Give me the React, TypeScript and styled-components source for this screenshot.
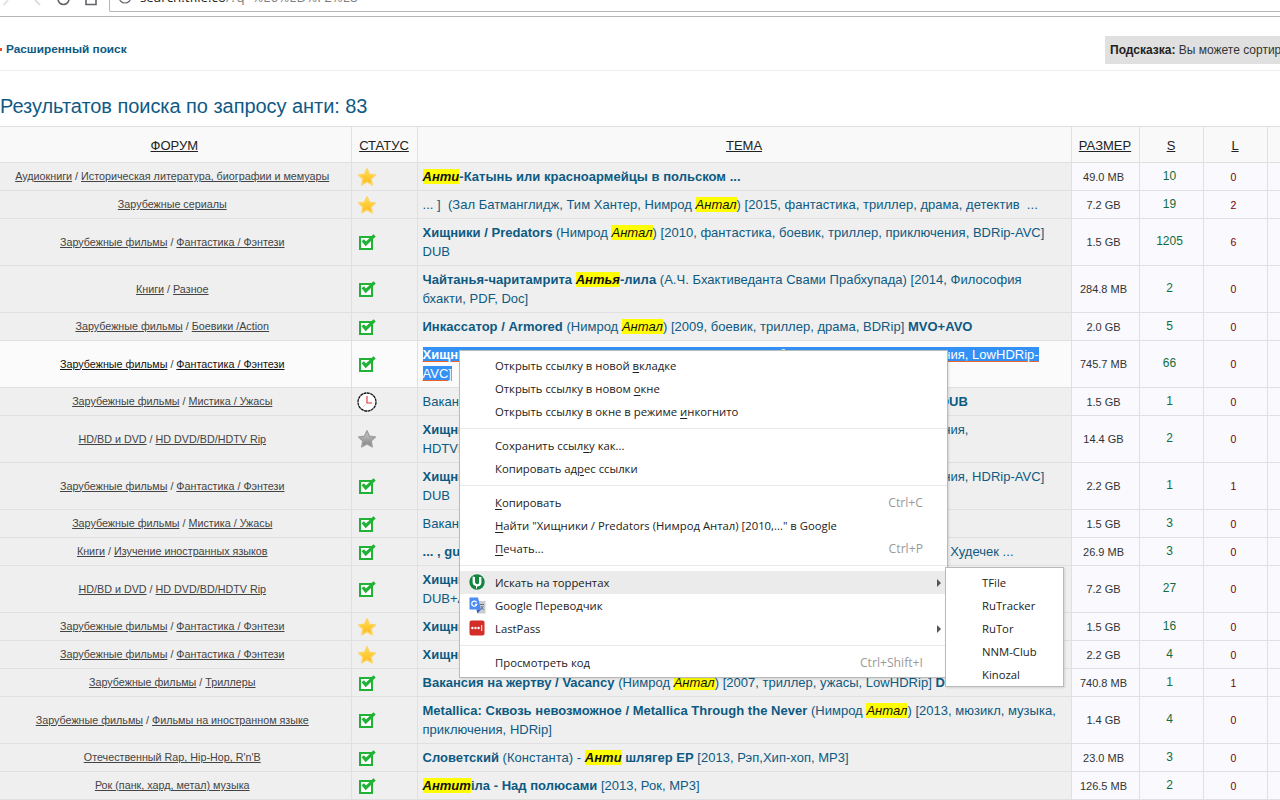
import React from "react";
import styled, { createGlobalStyle } from "styled-components";

const GlobalStyle = createGlobalStyle`
  html, body {
    margin: 0;
    padding: 0;
    height: 800px;
    overflow: hidden;
    background: #fff;
    font-family: "Liberation Sans", Arial, sans-serif;
  }
`;

const Page = styled.div`
  position: relative;
  width: 1280px;
  height: 800px;
  overflow: hidden;
`;

const Toolbar = styled.div`
  height: 16px;
  display: flex;
  align-items: flex-end;
  border-bottom: 1px solid #b5b5b5;
  overflow: hidden;
`;

const NavIcons = styled.div`
  width: 109px;
  height: 16px;
  flex: none;
  svg {
    display: block;
  }
`;

const AddressBox = styled.div`
  flex: 1;
  height: 20px;
  margin-bottom: 4px;
  display: flex;
  align-items: center;
  gap: 8px;
  padding-left: 8px;
  border-left: 1px solid #b5b5b5;
  border-bottom: 1px solid #b5b5b5;
  border-radius: 0 0 0 2px;
  font-family: "Open Sans", sans-serif;
  font-size: 13.3px;
  color: #222;
  white-space: nowrap;
  span {
    color: #808080;
  }
`;

const AddressText = styled.div`
  margin-top: -8px;
`;

const SearchBar = styled.div`
  display: grid;
  grid-template-columns: 1105px 1fr;
  align-items: center;
  height: 53px;
  border-bottom: 1px solid #eee;
  overflow: hidden;
`;

const AdvancedLink = styled.a`
  padding-top: 11px;
  font-size: 11.8px;
  font-weight: bold;
  color: #0d5a82;
  &::before {
    content: "";
    display: inline-block;
    width: 2px;
    height: 3px;
    margin: 0 4px 2px 0;
    background: #e2552b;
  }
`;

const Hint = styled.div`
  margin-top: 13px;
  height: 28px;
  line-height: 28px;
  padding-left: 5px;
  background: #e0e0e0;
  font-size: 12px;
  color: #333;
  white-space: nowrap;
  overflow: hidden;
  b {
    color: #222;
  }
`;

const Heading = styled.h1`
  margin: 0;
  height: 55px;
  padding-top: 23px;
  box-sizing: border-box;
  font-size: 20px;
  font-weight: normal;
  line-height: 24px;
  letter-spacing: -0.05px;
  color: #0f5a85;
`;

const Table = styled.table`
  width: 1340px;
  table-layout: fixed;
  border-collapse: collapse;
  border-top: 1px solid #e0e0e0;
`;

const HeadCell = styled.th<{ $w: number }>`
  box-sizing: border-box;
  width: ${(p) => p.$w}px;
  height: 36px;
  padding: 2px 0 0;
  background: #f9f9f9;
  border: 1px solid #e0e0e0;
  font-size: 13px;
  font-weight: normal;
  text-align: center;
  color: #222;
  text-decoration: underline;
  &:first-child {
    border-left: none;
    padding-right: 2px;
  }
`;

const ForumCell = styled.td`
  padding: 4px 8px 4px 2px;
  background: #efefef;
  border: 1px solid #e0e0e0;
  border-left: none;
  font-size: 10.75px;
  line-height: 19px;
  text-align: center;
  color: #444;
  u {
    color: #444;
  }
`;

const StatusCell = styled.td`
  padding: 0 0 0 5px;
  background: #efefef;
  border: 1px solid #e0e0e0;
  svg {
    display: block;
  }
`;

const TopicCell = styled.td`
  padding: 4px 8px 4px 5px;
  background: #efefef;
  border: 1px solid #e0e0e0;
  font-size: 13px;
  line-height: 19px;
  letter-spacing: 0.02px;
  color: #0d5a82;
  overflow: hidden;
`;

const Row = styled.tr<{ $active?: boolean }>`
  ${(p) =>
    p.$active
      ? `
    ${ForumCell}, ${StatusCell}, ${TopicCell} {
      background: #fbfbfb;
    }
    ${ForumCell} u {
      color: #111;
    }
  `
      : ""}
`;

const Mark = styled.i`
  background: #ffff00;
  color: #111;
`;

const Selected = styled.span`
  background: #3390f4;
  color: #fff;
  text-decoration: underline #e8622a;
  text-underline-offset: 2px;
`;

const SizeCell = styled.td`
  padding: 0 3px 0 0;
  background: #f9f9fe;
  border: 1px solid #e0e0e0;
  font-size: 11px;
  text-align: center;
  color: #333;
`;

const SeedCell = styled(SizeCell)`
  padding-bottom: 2px;
  font-size: 12px;
  color: #146c3c;
`;

const LeechCell = styled(SizeCell)`
  font-size: 10.5px;
  color: #7a0000;
`;

const Menu = styled.div`
  position: absolute;
  left: 459px;
  top: 350px;
  width: 487px;
  height: 323px;
  padding-top: 3px;
  box-sizing: content-box;
  background: #fff;
  border: 1px solid #bababa;
  box-shadow: 1px 1px 2px rgba(0, 0, 0, 0.12);
  font-family: "Open Sans", "Noto Sans", sans-serif;
  font-size: 11.3px;
  color: #222;
`;

const Item = styled.div<{ $hover?: boolean }>`
  position: relative;
  display: flex;
  align-items: center;
  height: 23px;
  padding-left: 35px;
  background: ${(p) => (p.$hover ? "#ebebeb" : "transparent")};
  white-space: nowrap;
  u {
    text-underline-offset: 2px;
  }
`;

const ItemIcon = styled.span`
  position: absolute;
  left: 9px;
  top: 3px;
  width: 17px;
  height: 17px;
  svg {
    display: block;
  }
`;

const Shortcut = styled.span`
  position: absolute;
  right: 24px;
  font-size: 12.2px;
  color: #9a9a9a;
`;

const Arrow = styled.span`
  position: absolute;
  right: 6px;
  top: 8px;
  width: 0;
  height: 0;
  border-left: 4px solid #555;
  border-top: 4px solid transparent;
  border-bottom: 4px solid transparent;
`;

const Separator = styled.div`
  height: 1px;
  margin: 5px 0;
  background: #e9e9e9;
`;

const SubMenu = styled.div`
  position: absolute;
  left: 485px;
  top: 216px;
  width: 117px;
  height: 115px;
  padding-top: 3px;
  background: #fff;
  border: 1px solid #bababa;
  box-shadow: 1px 1px 2px rgba(0, 0, 0, 0.12);
`;

const SubItem = styled.div`
  display: flex;
  align-items: center;
  height: 23px;
  padding-left: 36px;
`;

const Star = ({ grey }: { grey?: boolean }) => (
  <svg width="20" height="20" viewBox="0 0 22 22">
    <defs>
      <linearGradient id={grey ? "sg" : "sy"} x1="0" y1="0" x2="0" y2="1">
        <stop offset="0" stopColor={grey ? "#cfcfcf" : "#ffe04a"} />
        <stop offset="1" stopColor={grey ? "#808080" : "#fcb620"} />
      </linearGradient>
    </defs>
    <path
      d="M11 2l2.8 6 6.4.8-4.7 4.4 1.3 6.4L11 16.4l-5.8 3.2 1.3-6.4-4.7-4.4 6.4-.8z"
      fill={`url(#${grey ? "sg" : "sy"})`}
      stroke={grey ? "#a0a0a0" : "#fcd566"}
      strokeWidth="1.6"
      strokeLinejoin="round"
    />
  </svg>
);

const Check = () => (
  <svg width="20" height="20" viewBox="0 0 20 20">
    <rect x="3" y="5" width="12" height="12" fill="#fff" stroke="#21b335" strokeWidth="2" />
    <path d="M5.8 8.2l3 3.6L17.6 3.4" fill="none" stroke="#21b335" strokeWidth="3.2" />
  </svg>
);

const Clock = () => (
  <svg width="20" height="20" viewBox="0 0 20 20">
    <circle cx="10" cy="10" r="9" fill="#fff" stroke="#111" strokeWidth="1.3" strokeDasharray="3 .5" />
    <path d="M10 4v7h5" fill="none" stroke="#e62e2e" strokeWidth="1.1" />
    <path d="M10 11l-4 4" fill="none" stroke="#f3cccc" strokeWidth="1" />
  </svg>
);

const Torrent = () => (
  <svg width="16" height="16" viewBox="0 0 16 16">
    <circle cx="8" cy="8" r="7.7" fill="#12853f" />
    <path
      d="M3.6 2.6l2.4.4v5a2.2 2.2 0 0 0 4 1.2V3h2.4v5.4a4 4 0 0 1-4.4 4v2.2h-1v-2.6a4 4 0 0 1-3.4-4z"
      fill="#fff"
    />
  </svg>
);

const Translate = () => (
  <svg width="17" height="17" viewBox="0 0 17 17">
    <path d="M7 4h9.5v12.5H9z" fill="#c9ccd2" />
    <path d="M11 7.5h4M13 7v1M11.5 13l3-4M12 9l2.6 4" fill="none" stroke="#6d7179" strokeWidth="1" />
    <path d="M0.5 0.5h8.5l3 12H0.5z" fill="#4c8bf5" />
    <path
      d="M7.6 5.4a2.6 2.6 0 1 0 .2 2H5.9"
      fill="none"
      stroke="#fff"
      strokeWidth="1.2"
    />
    <path d="M8.4 16.5l3.6-4H7.4z" fill="#3a62b8" />
  </svg>
);

const LastPass = () => (
  <svg width="16" height="16" viewBox="0 0 16 16">
    <rect x="0.5" y="0.5" width="15" height="15" rx="2" fill="#d32d27" />
    <circle cx="3.4" cy="8" r="1.2" fill="#fff" />
    <circle cx="6.5" cy="8" r="1.2" fill="#fff" />
    <circle cx="9.6" cy="8" r="1.2" fill="#fff" />
    <rect x="12.2" y="5" width="1" height="6" fill="#fff" />
  </svg>
);

const NavDrawing = () => (
  <svg width="109" height="16" viewBox="0 0 109 16">
    <path d="M8 0L3.5 5" fill="none" stroke="#e4e4e4" strokeWidth="2" />
    <path d="M35 0l5 5" fill="none" stroke="#dddddd" strokeWidth="2" />
    <circle cx="63.5" cy="-1" r="5.5" fill="none" stroke="#5f6368" strokeWidth="1.6" />
    <path d="M86 0v4.5h10V0" fill="none" stroke="#5f6368" strokeWidth="1.6" />
  </svg>
);

const InfoIcon = () => (
  <svg width="14" height="14" viewBox="0 0 14 14" style={{ flex: "none", marginTop: -9 }}>
    <circle cx="7" cy="7" r="6" fill="none" stroke="#5f6368" strokeWidth="1.2" />
    <rect x="6.4" y="6" width="1.3" height="4" fill="#5f6368" />
  </svg>
);

type Status = "star" | "check" | "clock" | "grey";

type ResultRow = {
  forum: string;
  sub?: string;
  status: Status;
  topic: React.ReactNode;
  size: string;
  s: string;
  l: string;
  active?: boolean;
};

const Antal = () => <Mark>Антал</Mark>;

const rows: ResultRow[] = [
  {
    forum: "Аудиокниги",
    sub: "Историческая литература, биографии и мемуары",
    status: "star",
    topic: (
      <b>
        <Mark>Анти</Mark>-Катынь или красноармейцы в польском ...
      </b>
    ),
    size: "49.0 MB",
    s: "10",
    l: "0",
  },
  {
    forum: "Зарубежные сериалы",
    status: "star",
    topic: (
      <>
        ... ]&nbsp; (Зал Батманглидж, Тим Хантер, Нимрод <Antal />) [2015, фантастика, триллер, драма, детектив&nbsp; ...
      </>
    ),
    size: "7.2 GB",
    s: "19",
    l: "2",
  },
  {
    forum: "Зарубежные фильмы",
    sub: "Фантастика / Фэнтези",
    status: "check",
    topic: (
      <>
        <b>Хищники / Predators</b> (Нимрод <Antal />) [2010, фантастика, боевик, триллер, приключения, BDRip-AVC] DUB
      </>
    ),
    size: "1.5 GB",
    s: "1205",
    l: "6",
  },
  {
    forum: "Книги",
    sub: "Разное",
    status: "check",
    topic: (
      <>
        <b>
          Чайтанья-чаритамрита <Mark>Антья</Mark>-лила
        </b>{" "}
        (А.Ч. Бхактиведанта Свами Прабхупада) [2014, Философия бхакти, PDF, Doc]
      </>
    ),
    size: "284.8 MB",
    s: "2",
    l: "0",
  },
  {
    forum: "Зарубежные фильмы",
    sub: "Боевики /Action",
    status: "check",
    topic: (
      <>
        <b>Инкассатор / Armored</b> (Нимрод <Antal />) [2009, боевик, триллер, драма, BDRip] <b>MVO+AVO</b>
      </>
    ),
    size: "2.0 GB",
    s: "5",
    l: "0",
  },
  {
    forum: "Зарубежные фильмы",
    sub: "Фантастика / Фэнтези",
    status: "check",
    active: true,
    topic: (
      <Selected>
        <b>Хищники / Predators</b> (Нимрод Антал)&nbsp; [2010, фантастика, боевик, триллер, приключения, LowHDRip-AVC]
      </Selected>
    ),
    size: "745.7 MB",
    s: "66",
    l: "0",
  },
  {
    forum: "Зарубежные фильмы",
    sub: "Мистика / Ужасы",
    status: "clock",
    topic: (
      <>
        Вакансия на жертву 2 / Vacancy 2 (Эрик Бросс)&nbsp;&nbsp;&nbsp; [2008, триллер, ужасы, BDRip-AVC] <b>DUB</b>
      </>
    ),
    size: "1.5 GB",
    s: "1",
    l: "0",
  },
  {
    forum: "HD/BD и DVD",
    sub: "HD DVD/BD/HDTV Rip",
    status: "grey",
    topic: (
      <>
        <b>Хищники / Predators</b> (Нимрод Антал)&nbsp; [2010, фантастика, боевик, триллер, приключения,
        <br />
        HDTVRip]
      </>
    ),
    size: "14.4 GB",
    s: "2",
    l: "0",
  },
  {
    forum: "Зарубежные фильмы",
    sub: "Фантастика / Фэнтези",
    status: "check",
    topic: (
      <>
        <b>Хищники / Predators</b> (Нимрод Антал)&nbsp; [2010, фантастика, боевик, триллер, приключения, HDRip-AVC] DUB
      </>
    ),
    size: "2.2 GB",
    s: "1",
    l: "1",
  },
  {
    forum: "Зарубежные фильмы",
    sub: "Мистика / Ужасы",
    status: "check",
    topic: "Вакансия на жертву 2 / Vacancy 2",
    size: "1.5 GB",
    s: "3",
    l: "0",
  },
  {
    forum: "Книги",
    sub: "Изучение иностранных языков",
    status: "check",
    topic: (
      <>
        <b>... , guide</b> (Антон Дмитриевич Мельников, Николай Иванович Козлов, Игорь Николаев, Худечек ...
      </>
    ),
    size: "26.9 MB",
    s: "3",
    l: "0",
  },
  {
    forum: "HD/BD и DVD",
    sub: "HD DVD/BD/HDTV Rip",
    status: "check",
    topic: (
      <>
        <b>Хищники / Predators</b> (Нимрод Антал) [2010, фантастика, боевик, триллер, приключения, BDRip]
        <br />
        DUB+AVO
      </>
    ),
    size: "7.2 GB",
    s: "27",
    l: "0",
  },
  {
    forum: "Зарубежные фильмы",
    sub: "Фантастика / Фэнтези",
    status: "star",
    topic: <b>Хищники / Predators</b>,
    size: "1.5 GB",
    s: "16",
    l: "0",
  },
  {
    forum: "Зарубежные фильмы",
    sub: "Фантастика / Фэнтези",
    status: "star",
    topic: <b>Хищники / Predators</b>,
    size: "2.2 GB",
    s: "4",
    l: "0",
  },
  {
    forum: "Зарубежные фильмы",
    sub: "Триллеры",
    status: "check",
    topic: (
      <>
        <b>Вакансия на жертву / Vacancy</b> (Нимрод <Antal />) [2007, триллер, ужасы, LowHDRip] <b>DUB</b>
      </>
    ),
    size: "740.8 MB",
    s: "1",
    l: "1",
  },
  {
    forum: "Зарубежные фильмы",
    sub: "Фильмы на иностранном языке",
    status: "check",
    topic: (
      <>
        <b>Metallica: Сквозь невозможное / Metallica Through the Never</b> (Нимрод <Antal />) [2013, мюзикл, музыка, приключения, HDRip]
      </>
    ),
    size: "1.4 GB",
    s: "4",
    l: "0",
  },
  {
    forum: "Отечественный Rap, Hip-Hop, R'n'B",
    status: "check",
    topic: (
      <>
        <b>Словетский</b> (Константа) - <b><Mark>Анти</Mark> шлягер EP</b> [2013, Рэп,Хип-хоп, MP3]
      </>
    ),
    size: "23.0 MB",
    s: "3",
    l: "0",
  },
  {
    forum: "Рок (панк, хард, метал) музыка",
    status: "check",
    topic: (
      <>
        <b><Mark>Антит</Mark>іла - Над полюсами</b> [2013, Рок, MP3]
      </>
    ),
    size: "126.5 MB",
    s: "2",
    l: "0",
  },
];

const columns = [
  { title: "ФОРУМ", w: 351 },
  { title: "СТАТУС", w: 66 },
  { title: "ТЕМА", w: 654 },
  { title: "РАЗМЕР", w: 68 },
  { title: "S", w: 64 },
  { title: "L", w: 64 },
  { title: "", w: 73 },
];

const statusIcon = (status: Status) => {
  if (status === "star") return <Star />;
  if (status === "grey") return <Star grey />;
  if (status === "clock") return <Clock />;
  return <Check />;
};

const App = () => {
  return (
    <Page>
      <GlobalStyle />
      <Toolbar>
        <NavIcons>
          <NavDrawing />
        </NavIcons>
        <AddressBox>
          <InfoIcon />
          <AddressText>
            search.tfile.co<span>/?q=%E0%ED%F2%E8</span>
          </AddressText>
        </AddressBox>
      </Toolbar>
      <SearchBar>
        <AdvancedLink>Расширенный поиск</AdvancedLink>
        <Hint>
          <b>Подсказка:</b> Вы можете сортировать результаты поиска
        </Hint>
      </SearchBar>
      <Heading>Результатов поиска по запросу анти: 83</Heading>
      <Table>
        <thead>
          <tr>
            {columns.map((c) => (
              <HeadCell key={c.w + c.title} $w={c.w}>
                {c.title}
              </HeadCell>
            ))}
          </tr>
        </thead>
        <tbody>
          {rows.map((r, i) => (
            <Row key={i} $active={r.active}>
              <ForumCell>
                <u>{r.forum}</u>
                {r.sub && (
                  <>
                    {" / "}
                    <u>{r.sub}</u>
                  </>
                )}
              </ForumCell>
              <StatusCell>{statusIcon(r.status)}</StatusCell>
              <TopicCell>{r.topic}</TopicCell>
              <SizeCell>{r.size}</SizeCell>
              <SeedCell>{r.s}</SeedCell>
              <LeechCell>{r.l}</LeechCell>
              <SizeCell />
            </Row>
          ))}
        </tbody>
      </Table>
      <Menu>
        <Item>Открыть ссылку в новой&nbsp;<u>в</u>кладке</Item>
        <Item>Открыть ссылку в новом&nbsp;<u>о</u>кне</Item>
        <Item>Открыть ссылку в окне в режиме&nbsp;<u>и</u>нкогнито</Item>
        <Separator />
        <Item>Сохранить ссыл<u>к</u>у как...</Item>
        <Item>Копировать ад<u>р</u>ес ссылки</Item>
        <Separator />
        <Item>
          <u>К</u>опировать
          <Shortcut>Ctrl+C</Shortcut>
        </Item>
        <Item><u>Н</u>айти "Хищники / Predators (Нимрод Антал) [2010,..." в Google</Item>
        <Item>
          <u>П</u>ечать...
          <Shortcut>Ctrl+P</Shortcut>
        </Item>
        <Separator />
        <Item $hover>
          <ItemIcon><Torrent /></ItemIcon>
          Искать на торрентах
          <Arrow />
        </Item>
        <Item>
          <ItemIcon><Translate /></ItemIcon>
          Google Переводчик
        </Item>
        <Item>
          <ItemIcon><LastPass /></ItemIcon>
          LastPass
          <Arrow />
        </Item>
        <Separator />
        <Item>
          Просмотреть код
          <Shortcut>Ctrl+Shift+I</Shortcut>
        </Item>
        <SubMenu>
          <SubItem>TFile</SubItem>
          <SubItem>RuTracker</SubItem>
          <SubItem>RuTor</SubItem>
          <SubItem>NNM-Club</SubItem>
          <SubItem>Kinozal</SubItem>
        </SubMenu>
      </Menu>
    </Page>
  );
};

export default App;
